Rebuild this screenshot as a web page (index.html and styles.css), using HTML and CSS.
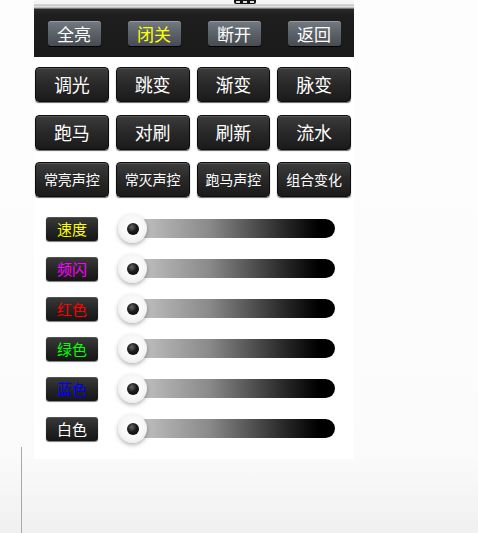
FILE: index.html
```html
<!DOCTYPE html>
<html lang="zh">
<head>
<meta charset="utf-8">
<link rel="stylesheet" href="styles.css">
</head>
<body>
<div class="panel">
  <div class="strip"><span class="mini"><i></i><i></i><i></i></span></div>
  <div class="topbar">
    <div class="tbtn">全亮</div>
    <div class="tbtn yellow">闭关</div>
    <div class="tbtn">断开</div>
    <div class="tbtn">返回</div>
  </div>
  <div class="grid">
    <div class="btn">调光</div>
    <div class="btn">跳变</div>
    <div class="btn">渐变</div>
    <div class="btn">脉变</div>
    <div class="btn">跑马</div>
    <div class="btn">对刷</div>
    <div class="btn">刷新</div>
    <div class="btn">流水</div>
    <div class="btn small">常亮声控</div>
    <div class="btn small">常灭声控</div>
    <div class="btn small">跑马声控</div>
    <div class="btn small">组合变化</div>
  </div>
  <div class="sliders">
    <div class="srow"><div class="label c-yellow">速度</div><div class="slider"><div class="track"></div><div class="knob"><span></span></div></div></div>
    <div class="srow"><div class="label c-magenta">频闪</div><div class="slider"><div class="track"></div><div class="knob"><span></span></div></div></div>
    <div class="srow"><div class="label c-red">红色</div><div class="slider"><div class="track"></div><div class="knob"><span></span></div></div></div>
    <div class="srow"><div class="label c-green">绿色</div><div class="slider"><div class="track"></div><div class="knob"><span></span></div></div></div>
    <div class="srow"><div class="label c-blue">蓝色</div><div class="slider"><div class="track"></div><div class="knob"><span></span></div></div></div>
    <div class="srow"><div class="label c-white">白色</div><div class="slider"><div class="track"></div><div class="knob"><span></span></div></div></div>
  </div>
</div>
<div class="footer"></div>
</body>
</html>
```
FILE: styles.css
```css
html, body {
  margin: 0;
  padding: 0;
}
body {
  width: 478px;
  height: 533px;
  overflow: hidden;
  background: linear-gradient(to bottom, #fdfdfd 0px, #fbfbfb 450px, #f0f0f0 533px);
  font-family: "Noto Sans CJK SC", "Noto Sans", sans-serif;
}
.panel {
  margin-left: 34px;
  width: 320px;
  background: #ffffff;
  padding-bottom: 18px;
}
.strip {
  height: 9px;
  background: linear-gradient(to bottom, #f6f6f6 0px, #f2f2f2 4px, #b9b9b9 5px, #dcdcdc 6px, #e6e6e6 7px, #9a9a9a 8px, #555 9px);
  display: flex;
}
.mini {
  margin-left: 200px;
  width: 22px;
  height: 4px;
  background: #111;
  border-radius: 0 0 2px 2px;
  display: flex;
  justify-content: space-around;
  align-items: center;
}
.mini i {
  width: 4px;
  height: 2px;
  background: #ddd;
}
.topbar {
  height: 48px;
  background: linear-gradient(to bottom, #2a2a2a 0px, #1e1e1e 6px, #1a1a1a 100%);
  display: flex;
  justify-content: space-around;
  align-items: center;
}
.tbtn {
  width: 53px;
  height: 25px;
  border-radius: 3px;
  background: linear-gradient(to bottom, #737a82 0%, #5b6168 50%, #474c52 100%);
  box-shadow: inset 0 1px 0 rgba(255,255,255,0.25), 0 1px 0 #000;
  color: #fff;
  font-size: 17px;
  line-height: 25px;
  text-align: center;
}
.tbtn.yellow { color: #ffff00; }
.grid {
  display: grid;
  grid-template-columns: repeat(4, 1fr);
  column-gap: 7px;
  row-gap: 12px;
  padding: 10px 3px 0 1px;
}
.grid .btn:nth-child(-n+4) { margin-bottom: 1px; }
.btn {
  height: 35px;
  border-radius: 4px;
  background: linear-gradient(to bottom, #3c3c3c 0%, #2a2a2a 45%, #1a1a1a 100%);
  box-shadow: inset 0 1px 0 rgba(255,255,255,0.15), 0 1px 1px #666;
  border: 1px solid #0c0c0c;
  box-sizing: border-box;
  color: #fff;
  font-size: 18px;
  line-height: 33px;
  text-align: center;
}
.btn.small {
  font-size: 14px;
}
.sliders {
  padding: 19px 0 0 12px;
  display: flex;
  flex-direction: column;
  gap: 15px;
}
.srow {
  display: flex;
  align-items: center;
  height: 25px;
}
.label {
  width: 52px;
  height: 24px;
  border-radius: 3px;
  background: linear-gradient(to bottom, #3a3a3a 0%, #262626 50%, #151515 100%);
  box-shadow: inset 0 1px 0 rgba(255,255,255,0.12), 0 1px 1px #777;
  font-size: 15px;
  line-height: 24px;
  text-align: center;
}
.c-yellow { color: #ffff00; }
.c-magenta { color: #ff00ff; }
.c-red { color: #ff0000; }
.c-green { color: #00ff00; }
.c-blue { color: #0000ff; }
.c-white { color: #ffffff; }
.slider {
  position: relative;
  margin-left: 20px;
  width: 217px;
  height: 29px;
  display: flex;
  align-items: center;
}
.track {
  margin-left: 7px;
  flex: 1;
  height: 19px;
  border-radius: 0 10px 10px 0;
  background: linear-gradient(to right, #cccccc 0%, #8a8a8a 40%, #2a2a2a 75%, #000 92%);
}
.knob {
  position: absolute;
  left: 0;
  top: 0;
  width: 29px;
  height: 29px;
  border-radius: 50%;
  background: radial-gradient(circle at 50% 45%, #ffffff 0%, #f7f7f7 55%, #dcdcdc 100%);
  box-shadow: 0 2px 4px rgba(0,0,0,0.3);
  display: flex;
  align-items: center;
  justify-content: center;
}
.knob span {
  width: 12px;
  height: 12px;
  border-radius: 50%;
  background: radial-gradient(circle at 40% 35%, #666 0%, #1a1a1a 45%, #000 100%);
}
.footer {
  margin-top: -12px;
  margin-left: 21px;
  height: 100px;
  border-left: 1px solid #a8a8a8;
}
```
